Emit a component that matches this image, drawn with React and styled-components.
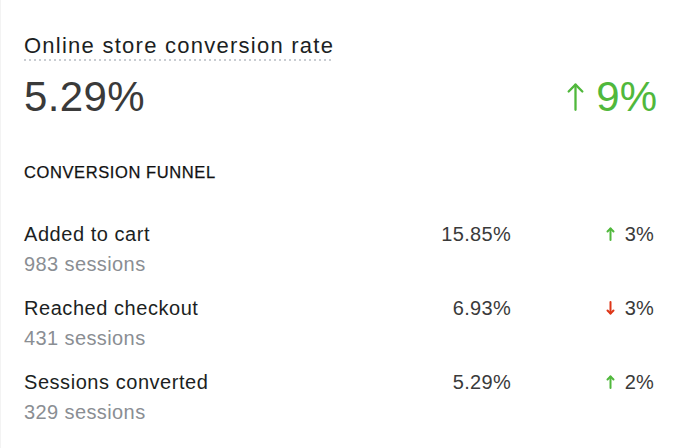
import React from "react";
import styled, { createGlobalStyle } from "styled-components";

const Global = createGlobalStyle`
  html, body { margin: 0; padding: 0; background: #ffffff; }
  body { font-family: "Liberation Sans", Arial, Helvetica, sans-serif; }
`;

const Card = styled.section`
  box-sizing: border-box;
  width: 684px;
  height: 448px;
  padding: 32px 27px 0 23px;
  border-left: 1px solid #f3f3f3;
  background: #fff;
`;

const Title = styled.h2`
  display: inline-block;
  margin: 0;
  font-size: 22px;
  font-weight: 400;
  line-height: 27px;
  letter-spacing: 1.25px;
  color: #1c1f23;
  padding-bottom: 2px;
  background-image: linear-gradient(to right, #c9cdd2 2px, transparent 2px);
  background-size: 5px 2px;
  background-repeat: repeat-x;
  background-position: 0 100%;
`;

const Headline = styled.div`
  display: flex;
  justify-content: space-between;
  align-items: baseline;
  margin-top: 12px;
`;

const BigValue = styled.div`
  font-size: 42px;
  line-height: 48px;
  color: #3a3a3a;
  letter-spacing: 0.4px;
`;

const BigChange = styled.div`
  display: flex;
  align-items: baseline;
  gap: 12px;
  font-size: 42px;
  line-height: 48px;
  color: #50b83c;
`;

const SectionTitle = styled.h3`
  margin: 41px 0 0;
  font-size: 16.5px;
  font-weight: 400;
  line-height: 20px;
  letter-spacing: 0.6px;
  color: #111;
  -webkit-text-stroke: 0.25px #111;
`;

const Funnel = styled.div`
  margin-top: 40px;
  display: flex;
  flex-direction: column;
  gap: 20px;
`;

const Row = styled.div`
  display: grid;
  grid-template-columns: 1fr 120px 143px;
  padding-right: 3px;
`;

const Label = styled.div`
  font-size: 20px;
  line-height: 24px;
  letter-spacing: 0.55px;
  color: #1c1f23;
`;

const Sub = styled.div`
  margin-top: 7px;
  font-size: 20px;
  line-height: 23px;
  letter-spacing: 0.4px;
  color: #8a8e93;
`;

const Value = styled.div`
  text-align: right;
  font-size: 20px;
  line-height: 24px;
  letter-spacing: 0.3px;
  color: #3a3a3a;
`;

const Change = styled.div`
  display: flex;
  justify-content: flex-end;
  align-items: center;
  gap: 10px;
  height: 24px;
  font-size: 20px;
  line-height: 24px;
  letter-spacing: 0.2px;
  color: #3a3a3a;
`;

const Arrow = ({ dir = "up", color, w = 10, h = 14, sw = 2 }) => (
  <svg width={w} height={h} viewBox={`0 0 ${w} ${h}`} fill="none" stroke={color} strokeWidth={sw} strokeLinecap="round" strokeLinejoin="round">
    {dir === "up" ? (
      <>
        <line x1={w / 2} y1={sw / 2 + 0.5} x2={w / 2} y2={h - sw / 2} />
        <polyline points={`${sw / 2 + 0.5},${w / 2} ${w / 2},${sw / 2 + 0.5} ${w - sw / 2 - 0.5},${w / 2}`} />
      </>
    ) : (
      <>
        <line x1={w / 2} y1={sw / 2} x2={w / 2} y2={h - sw / 2 - 0.5} />
        <polyline points={`${sw / 2 + 0.5},${h - w / 2} ${w / 2},${h - sw / 2 - 0.5} ${w - sw / 2 - 0.5},${h - w / 2}`} />
      </>
    )}
  </svg>
);

const rows = [
  { label: "Added to cart", sessions: "983 sessions", value: "15.85%", dir: "up", change: "3%" },
  { label: "Reached checkout", sessions: "431 sessions", value: "6.93%", dir: "down", change: "3%" },
  { label: "Sessions converted", sessions: "329 sessions", value: "5.29%", dir: "up", change: "2%" },
];

export default function App() {
  return (
    <>
      <Global />
      <Card>
        <Title>Online store conversion rate</Title>
        <Headline>
          <BigValue>5.29%</BigValue>
          <BigChange>
            <Arrow dir="up" color="#50b83c" w={17} h={28} sw={2.3} />
            <span>9%</span>
          </BigChange>
        </Headline>
        <SectionTitle>CONVERSION FUNNEL</SectionTitle>
        <Funnel>
          {rows.map((r) => (
            <Row key={r.label}>
              <div>
                <Label>{r.label}</Label>
                <Sub>{r.sessions}</Sub>
              </div>
              <Value>{r.value}</Value>
              <Change>
                <Arrow dir={r.dir} color={r.dir === "up" ? "#50b83c" : "#de3618"} w={9} h={14} sw={2} />
                <span>{r.change}</span>
              </Change>
            </Row>
          ))}
        </Funnel>
      </Card>
    </>
  );
}
